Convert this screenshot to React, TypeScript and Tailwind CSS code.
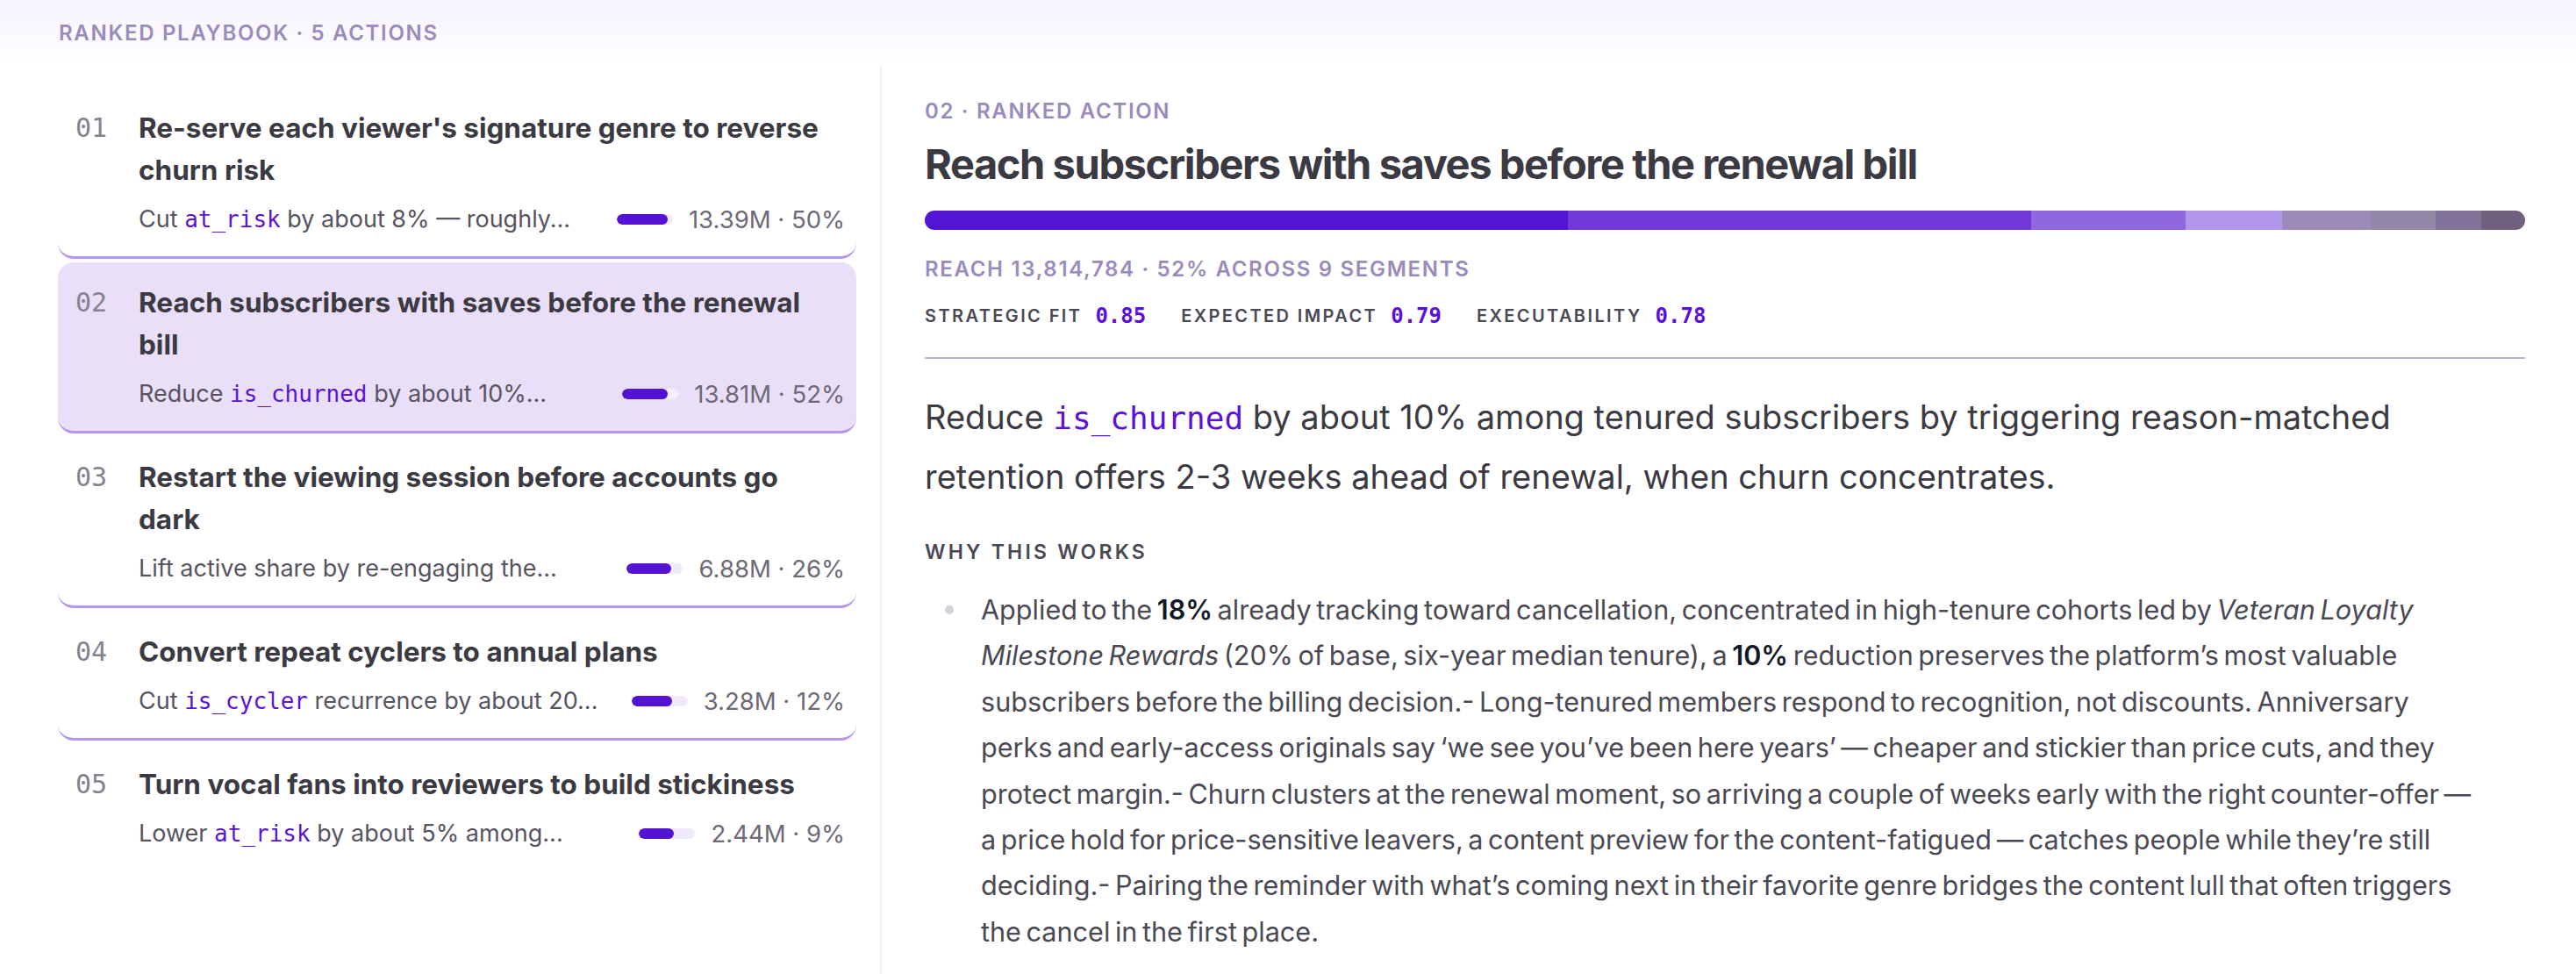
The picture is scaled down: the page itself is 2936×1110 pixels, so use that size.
import React from 'react';

type Part = { t: string; code?: boolean };

interface Action {
  rank: string;
  title: string;
  summary: Part[];
  reach: string;
  fill: number;
}

const actions: Action[] = [
  {
    rank: '01',
    title: "Re-serve each viewer's signature genre to reverse churn risk",
    summary: [{ t: 'Cut ' }, { t: 'at_risk', code: true }, { t: ' by about 8% — roughly...' }],
    reach: '13.39M · 50%',
    fill: 58,
  },
  {
    rank: '02',
    title: 'Reach subscribers with saves before the renewal bill',
    summary: [{ t: 'Reduce ' }, { t: 'is_churned', code: true }, { t: ' by about 10%...' }],
    reach: '13.81M · 52%',
    fill: 52,
  },
  {
    rank: '03',
    title: 'Restart the viewing session before accounts go dark',
    summary: [{ t: 'Lift active share by re-engaging the...' }],
    reach: '6.88M · 26%',
    fill: 51,
  },
  {
    rank: '04',
    title: 'Convert repeat cyclers to annual plans',
    summary: [{ t: 'Cut ' }, { t: 'is_cycler', code: true }, { t: ' recurrence by about 20...' }],
    reach: '3.28M · 12%',
    fill: 46,
  },
  {
    rank: '05',
    title: 'Turn vocal fans into reviewers to build stickiness',
    summary: [{ t: 'Lower ' }, { t: 'at_risk', code: true }, { t: ' by about 5% among...' }],
    reach: '2.44M · 9%',
    fill: 40,
  },
];

// share of reach per segment, left to right
const segments = [
  { grow: 733, color: 'bg-[#5414d4]' },
  { grow: 528, color: 'bg-[#7039d8]' },
  { grow: 176, color: 'bg-[#9167e0]' },
  { grow: 110, color: 'bg-[#b296e9]' },
  { grow: 102, color: 'bg-[#9c8bb6]' },
  { grow: 73, color: 'bg-[#9387a8]' },
  { grow: 52, color: 'bg-[#817399]' },
  { grow: 50, color: 'bg-[#71617f]' },
];

const scores = [
  { label: 'Strategic fit', value: '0.85' },
  { label: 'Expected impact', value: '0.79' },
  { label: 'Executability', value: '0.78' },
];

const mono = "font-['DejaVu_Sans_Mono',monospace]";

function ActionCard({ action, active, last }: { action: Action; active: boolean; last: boolean }) {
  return (
    <div
      className={`flex rounded-[18px] py-[22px] pl-[20px] pr-[13px] ${
        last ? 'border-b-[3px] border-transparent' : 'border-b-[3px] border-[#b596ea]'
      } ${active ? 'bg-[#e9dff8]' : 'bg-white'}`}
    >
      <div className={`w-[72px] shrink-0 text-[30px] leading-[48px] text-[#86828f] ${mono}`}>{action.rank}</div>
      <div className="min-w-0 flex-1">
        <h3 className="pr-[14px] text-[31.5px] font-bold leading-[48px] text-[#3b3a42]">{action.title}</h3>
        <div className="mt-[12px] flex items-center gap-[18px]">
          <p className="min-w-0 flex-1 truncate text-[27px] leading-[40px] text-[#57535f]">
            {action.summary.map((p, i) =>
              p.code ? (
                <span key={i} className={`text-[26px] text-[#5a12d6] ${mono}`}>
                  {p.t}
                </span>
              ) : (
                <span key={i}>{p.t}</span>
              )
            )}
          </p>
          <div className="flex shrink-0 items-center gap-[18px]">
            <div className={`h-[12px] w-[64px] overflow-hidden rounded-full ${active ? 'bg-[#f4effc]' : 'bg-[#efe9fa]'}`}>
              <div className="h-full rounded-full bg-[#5412d3]" style={{ width: action.fill }} />
            </div>
            <span className="text-[27.5px] leading-[40px] text-[#6d6977]">{action.reach}</span>
          </div>
        </div>
      </div>
    </div>
  );
}

export default function App() {
  return (
    <div className="min-h-[1110px] w-[2936px] bg-white font-['Inter',sans-serif] text-[#3b3a42]">
      <header className="flex h-[75px] items-center bg-gradient-to-b from-[#f6f3fd] to-white px-[67px]">
        <span className="text-[24px] font-semibold uppercase tracking-[0.07em] text-[#9a8bbd]">
          Ranked playbook · 5 actions
        </span>
      </header>

      <div className="flex">
        <aside className="min-h-[1035px] w-[1005px] shrink-0 border-r-2 border-[#f1eff4] pl-[66px] pr-[27px] pt-[25px]">
          <div className="flex flex-col gap-[4px]">
            {actions.map((a, i) => (
              <ActionCard key={a.rank} action={a} active={i === 1} last={i === actions.length - 1} />
            ))}
          </div>
        </aside>

        <main className="min-w-0 flex-1 pl-[49px] pr-[58px] pt-[37px]">
          <div className="text-[24px] font-semibold uppercase leading-[30px] tracking-[0.07em] text-[#9a8bbd]">
            02 · Ranked action
          </div>
          <h1 className="mt-[17px] text-[47px] font-bold leading-[56px] tracking-[-0.03em] text-[#3b3a42]">
            Reach subscribers with saves before the renewal bill
          </h1>

          <div className="mt-[25px] flex h-[22px] overflow-hidden rounded-full">
            {segments.map((s, i) => (
              <div key={i} className={`h-full ${s.color}`} style={{ flexGrow: s.grow, flexBasis: 0 }} />
            ))}
          </div>

          <div className="mt-[30px] text-[24px] font-semibold uppercase leading-[30px] tracking-[0.07em] text-[#9a8bbd]">
            Reach 13,814,784 · 52% across 9 segments
          </div>

          <div className="mt-[23px] flex items-center gap-[40px] border-b-2 border-[#b9b0d0] pb-[32px]">
            {scores.map((s) => (
              <div key={s.label} className="flex items-center gap-[15px] leading-[30px]">
                <span className="text-[20px] font-semibold uppercase tracking-[0.12em] text-[#4a4953]">{s.label}</span>
                <span className={`text-[24px] font-bold text-[#5a10d8] ${mono}`}>{s.value}</span>
              </div>
            ))}
          </div>

          <p className="mr-[24px] mt-[33px] text-[38px] leading-[67px] text-[#3b3a42]">
            Reduce <span className={`text-[36px] text-[#5a12d6] ${mono}`}>is_churned</span> by about 10% among tenured
            subscribers by triggering reason-matched retention offers 2-3 weeks ahead of renewal, when churn concentrates.
          </p>

          <h2 className="mt-[37px] text-[23px] font-semibold uppercase leading-[30px] tracking-[0.14em] text-[#4a4953]">
            Why this works
          </h2>

          <ul className="mt-[25px]">
            <li className="flex">
              <span className="ml-[23px] mr-[31px] mt-[21px] h-[10px] w-[10px] shrink-0 rounded-full bg-[#d3d2da]" />
              <p className="mr-[60px] text-[30.6px] leading-[52.4px] text-[#4a4953] [word-spacing:-3px]">
                Applied to the <strong className="font-semibold text-[#111827]">18%</strong> already tracking toward
                cancellation, concentrated in high-tenure cohorts led by <em>Veteran Loyalty Milestone Rewards</em> (20%
                of base, six-year median tenure), a <strong className="font-semibold text-[#111827]">10%</strong>{' '}
                reduction preserves the platform’s most valuable subscribers before the billing decision.- Long-tenured
                members respond to recognition, not discounts. Anniversary perks and early-access originals say ‘we see
                you’ve been here years’ — cheaper and stickier than price cuts, and they protect margin.- Churn clusters at
                the renewal moment, so arriving a couple of weeks early with the right counter-offer — a price hold for
                price-sensitive leavers, a content preview for the content-fatigued — catches people while they’re still
                deciding.- Pairing the reminder with what’s coming next in their favorite genre bridges the content lull
                that often triggers the cancel in the first place.
              </p>
            </li>
          </ul>
        </main>
      </div>
    </div>
  );
}
